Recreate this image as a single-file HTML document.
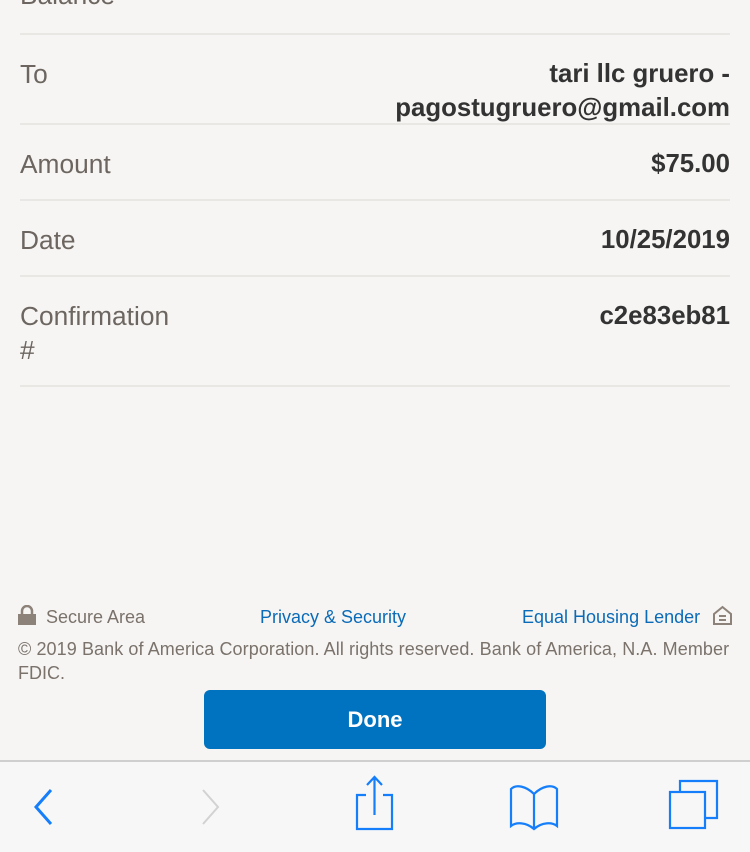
<!DOCTYPE html>
<html><head><meta charset="utf-8"><style>
body{margin:0;width:750px;height:850px;background:#f6f5f3;position:relative;overflow:hidden;font-family:"Liberation Sans",sans-serif;}
.t{position:absolute;white-space:nowrap;line-height:1}
.l{color:#6d6660;font-size:26.3px;left:20px}
.v{color:#333;font-size:25.8px;font-weight:bold;right:20px;text-align:right}
.hr{position:absolute;left:20px;right:20px;height:2px;background:#e9e7e4}
.f{font-size:18px;color:#7a726b}
.a{color:#0a6bb8}
</style></head><body>
<div class="t l" style="top:-18px">Balance</div>
<div class="hr" style="top:33px"></div>
<div class="t l" style="top:61px">To</div>
<div class="t v" style="top:62px">tari llc gruero -</div>
<div class="t v" style="top:96px">pagostugruero@gmail.com</div>
<div class="hr" style="top:123px"></div>
<div class="t l" style="top:151px">Amount</div>
<div class="t v" style="top:152px">$75.00</div>
<div class="hr" style="top:199px"></div>
<div class="t l" style="top:227px">Date</div>
<div class="t v" style="top:228px">10/25/2019</div>
<div class="hr" style="top:275px"></div>
<div class="t l" style="top:303px">Confirmation</div>
<div class="t l" style="top:337px">#</div>
<div class="t v" style="top:304px">c2e83eb81</div>
<div class="hr" style="top:385px"></div>

<svg style="position:absolute;left:18px;top:605px" width="18" height="20"><path d="M4 9V6a5 5 0 0 1 10 0v3" fill="none" stroke="#8c8279" stroke-width="2.5"/><rect x="0" y="9" width="18" height="11" fill="#8c8279"/></svg>
<div class="t f" style="left:46px;top:608px">Secure Area</div>
<div class="t f a" style="left:260px;top:608px">Privacy &amp; Security</div>
<div class="t f a" style="left:522px;top:608px">Equal Housing Lender</div>
<svg style="position:absolute;left:712px;top:605px" width="21" height="20"><path d="M2 9L10.5 2L19 9V19H2Z" fill="none" stroke="#8c8279" stroke-width="2"/><rect x="7" y="10" width="7" height="2" fill="#8c8279"/><rect x="7" y="14" width="7" height="2" fill="#8c8279"/></svg>
<div class="t f" style="left:18px;top:640px;letter-spacing:0.09px">© 2019 Bank of America Corporation. All rights reserved. Bank of America, N.A. Member</div>
<div class="t f" style="left:18px;top:664px">FDIC.</div>
<div style="position:absolute;left:204px;top:690px;width:342px;height:59px;background:#0073c0;border-radius:6px;color:#fff;font-weight:bold;font-size:22px;text-align:center;line-height:59px">Done</div>

<div style="position:absolute;left:0;top:760px;width:750px;height:90px;background:#f7f7f7;border-top:2px solid #cfcfcf"></div>
<svg style="position:absolute;left:0;top:762px" width="750" height="88" fill="none" stroke-width="3">
<path d="M51 28L36 45L51 62" stroke="#157efb"/>
<path d="M203 28L218 45L203 62" stroke="#d2d2d2" stroke-width="2"/>
<g stroke="#157efb" stroke-width="2.2">
<path d="M366 33H357V67H392V33H383"/><path d="M374.5 53V15M367 23L374.5 15L382 23"/>
<path d="M534 32C526 24 516 22 511 27V64C516 60 526 60 534 67C542 60 552 60 557 64V27C552 22 542 24 534 32V67"/>
<rect x="670" y="30" width="35" height="36"/><path d="M680 30V19H717V56H705"/>
</g></svg>
</body></html>
